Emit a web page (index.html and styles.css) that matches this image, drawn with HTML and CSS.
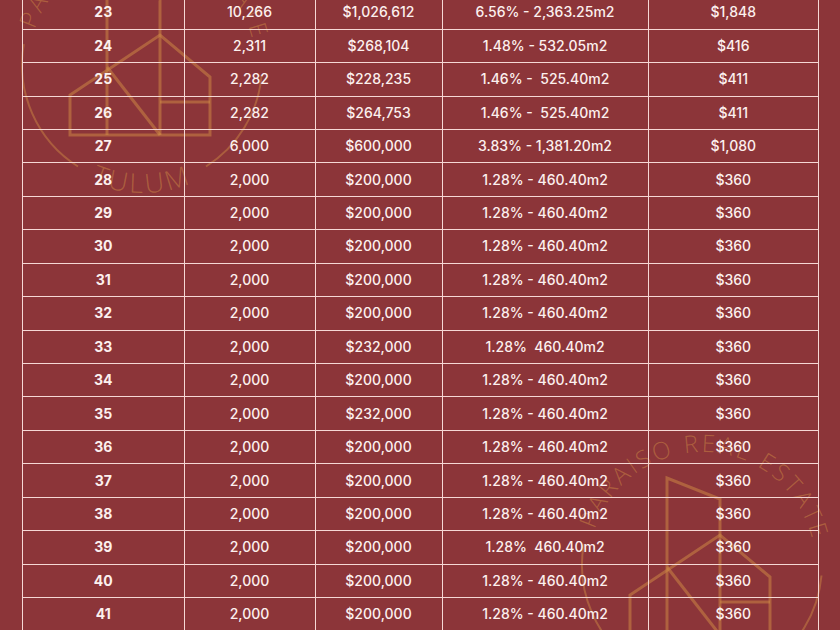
FILE: index.html
```html
<!DOCTYPE html>
<html lang="en">
<head>
<meta charset="utf-8">
<title>Lotes</title>
<link rel="stylesheet" href="styles.css">
</head>
<body>
<div class="page">
  <svg class="mark mark-tl" width="300" height="300" viewBox="-150 -150 300 300" aria-hidden="true">
    <defs>
      <path id="topArc" d="M -113,0 A 113 113 0 1 1 113,0 A 113 113 0 1 1 -113,0"/>
      <path id="botArc" d="M -128,0 A 128 128 0 0 0 128,0"/>
    </defs>
    <g class="ring">
      <path d="M -118.2,-20.8 A 120 120 0 0 0 -64,101.5"/>
      <path d="M 64,101.5 A 120 120 0 0 0 119.5,10.5"/>
    </g>
    <g class="house">
      <path d="M -35,70 V -87 L 18,-66 V 70"/>
      <path d="M -72,70 V 30 L 18,-30 L 68,12 V 70 Z"/>
      <path d="M 18,37 H 68"/>
      <path d="M -35,2 L 18,70"/>
    </g>
    <text class="ring-text"><textPath href="#topArc" startOffset="36" textLength="292" lengthAdjust="spacing">PARAISO REAL ESTATE</textPath></text>
    <text class="ring-text ring-bottom"><textPath href="#botArc" startOffset="50%" text-anchor="middle">TULUM</textPath></text>
  </svg>
  <svg class="mark mark-br" width="300" height="300" viewBox="-150 -150 300 300" aria-hidden="true">
    <defs>
      <path id="topArc2" d="M -113,0 A 113 113 0 1 1 113,0 A 113 113 0 1 1 -113,0"/>
    </defs>
    <g class="ring">
      <path d="M -118.2,-20.8 A 120 120 0 0 0 -64,101.5"/>
      <path d="M 64,101.5 A 120 120 0 0 0 119.5,10.5"/>
    </g>
    <g class="house">
      <path d="M -35,70 V -87 L 18,-66 V 70"/>
      <path d="M -72,70 V 30 L 18,-30 L 68,12 V 70 Z"/>
      <path d="M 18,37 H 68"/>
      <path d="M -35,2 L 18,70"/>
    </g>
    <text class="ring-text"><textPath href="#topArc2" startOffset="36" textLength="292" lengthAdjust="spacing">PARAISO REAL ESTATE</textPath></text>
  </svg>

  <table class="lots">
    <colgroup>
      <col class="c1"><col class="c2"><col class="c3"><col class="c4"><col class="c5">
    </colgroup>
    <tbody>
      <tr><td class="num">23</td><td>10,266</td><td>$1,026,612</td><td>6.56% - 2,363.25m2</td><td>$1,848</td></tr>
      <tr><td class="num">24</td><td>2,311</td><td>$268,104</td><td>1.48% - 532.05m2</td><td>$416</td></tr>
      <tr><td class="num">25</td><td>2,282</td><td>$228,235</td><td>1.46% - &nbsp;525.40m2</td><td>$411</td></tr>
      <tr><td class="num">26</td><td>2,282</td><td>$264,753</td><td>1.46% - &nbsp;525.40m2</td><td>$411</td></tr>
      <tr><td class="num">27</td><td>6,000</td><td>$600,000</td><td>3.83% - 1,381.20m2</td><td>$1,080</td></tr>
      <tr><td class="num">28</td><td>2,000</td><td>$200,000</td><td>1.28% - 460.40m2</td><td>$360</td></tr>
      <tr><td class="num">29</td><td>2,000</td><td>$200,000</td><td>1.28% - 460.40m2</td><td>$360</td></tr>
      <tr><td class="num">30</td><td>2,000</td><td>$200,000</td><td>1.28% - 460.40m2</td><td>$360</td></tr>
      <tr><td class="num">31</td><td>2,000</td><td>$200,000</td><td>1.28% - 460.40m2</td><td>$360</td></tr>
      <tr><td class="num">32</td><td>2,000</td><td>$200,000</td><td>1.28% - 460.40m2</td><td>$360</td></tr>
      <tr><td class="num">33</td><td>2,000</td><td>$232,000</td><td>1.28% &nbsp;460.40m2</td><td>$360</td></tr>
      <tr><td class="num">34</td><td>2,000</td><td>$200,000</td><td>1.28% - 460.40m2</td><td>$360</td></tr>
      <tr><td class="num">35</td><td>2,000</td><td>$232,000</td><td>1.28% - 460.40m2</td><td>$360</td></tr>
      <tr><td class="num">36</td><td>2,000</td><td>$200,000</td><td>1.28% - 460.40m2</td><td>$360</td></tr>
      <tr><td class="num">37</td><td>2,000</td><td>$200,000</td><td>1.28% - 460.40m2</td><td>$360</td></tr>
      <tr><td class="num">38</td><td>2,000</td><td>$200,000</td><td>1.28% - 460.40m2</td><td>$360</td></tr>
      <tr><td class="num">39</td><td>2,000</td><td>$200,000</td><td>1.28% &nbsp;460.40m2</td><td>$360</td></tr>
      <tr><td class="num">40</td><td>2,000</td><td>$200,000</td><td>1.28% - 460.40m2</td><td>$360</td></tr>
      <tr><td class="num">41</td><td>2,000</td><td>$200,000</td><td>1.28% - 460.40m2</td><td>$360</td></tr>
    </tbody>
  </table>
</div>
</body>
</html>
```
FILE: styles.css
```css
html, body {
  margin: 0;
  padding: 0;
  background: #8c3539;
  overflow: hidden;
}

.page {
  position: relative;
  width: 840px;
  height: 630px;
  overflow: hidden;
}

.mark {
  position: absolute;
  z-index: 0;
  overflow: visible;
}

.mark-tl {
  left: -8px;
  top: -85px;
}

.mark-br {
  left: 552px;
  top: 415px;
}

.ring path {
  fill: none;
  stroke: #d18d45;
  stroke-opacity: 0.45;
  stroke-width: 2;
}

.house path {
  fill: none;
  stroke: #d18d45;
  stroke-opacity: 0.5;
  stroke-width: 3;
  stroke-linejoin: miter;
}

.ring-text {
  fill: #d18d45;
  fill-opacity: 0.48;
  font-family: "Open Sans", "DejaVu Sans", sans-serif;
  font-weight: 300;
  font-size: 24px;
}

.ring-bottom {
  font-size: 27px;
  letter-spacing: 3px;
}

.lots {
  position: relative;
  z-index: 1;
  margin: -4.8px 0 0 22px;
  width: 796px;
  border-collapse: collapse;
  table-layout: fixed;
  font-family: Inter, "Noto Sans", sans-serif;
  font-size: 14px;
  font-weight: 500;
  color: #fcf0ee;
}

.c1 { width: 161.5px; }
.c2 { width: 131px; }
.c3 { width: 127px; }
.c4 { width: 206px; }
.c5 { width: 170.5px; }

.lots tr {
  height: 33.44px;
}

.lots td {
  border: 1.75px solid #f6d8d5;
  padding: 0;
  text-align: center;
  vertical-align: middle;
  line-height: 16px;
  white-space: nowrap;
}

.lots td.num {
  font-weight: 700;
}
```
